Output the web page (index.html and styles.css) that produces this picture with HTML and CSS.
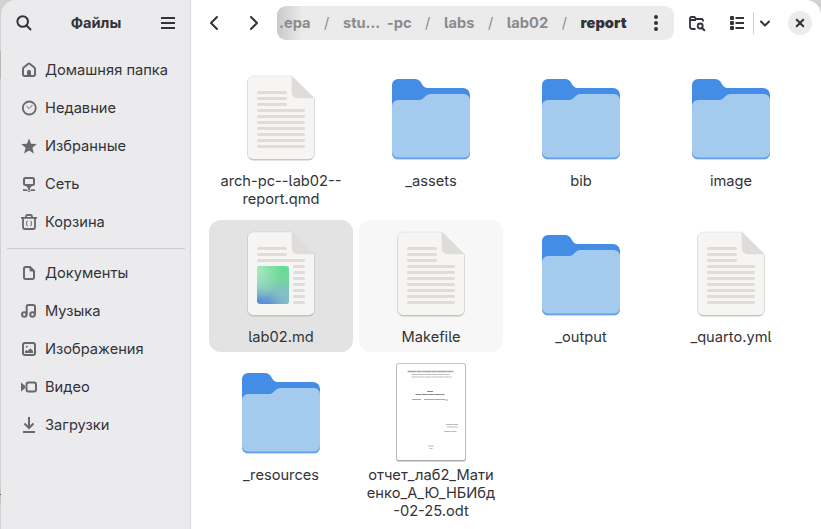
FILE: index.html
```html
<!DOCTYPE html>
<html lang="ru">
<head>
<meta charset="utf-8">
<title>Файлы</title>
<link rel="stylesheet" href="styles.css">
</head>
<body>
<svg class="defs" width="0" height="0" aria-hidden="true">
  <defs>
    <linearGradient id="green" x1="0.65" y1="0" x2="0.35" y2="1"><stop offset="0" stop-color="#66dd93"/><stop offset=".3" stop-color="#72d6a0"/><stop offset=".65" stop-color="#7fbfc0"/><stop offset="1" stop-color="#5b90d8"/></linearGradient>
    <radialGradient id="pale" cx="0" cy=".15" r=".75"><stop offset="0" stop-color="#a9e8bd"/><stop offset="1" stop-color="#a9e8bd" stop-opacity="0"/></radialGradient>
    <radialGradient id="haze" cx="1" cy=".95" r=".6"><stop offset="0" stop-color="#88bdc9"/><stop offset="1" stop-color="#88bdc9" stop-opacity="0"/></radialGradient>
    <symbol id="sheet" viewBox="0 0 96 96">
      <path d="M20.500 7H59L82 29.500V84.500a6 6 0 0 1-6 6H20a6 6 0 0 1-6-6V13a6 6 0 0 1 6.500-6z" fill="#000" opacity=".1"/>
      <path d="M20.500 6H59L81.500 28.500V83.500a6 6 0 0 1-6 6h-55a6 6 0 0 1-6-6V12a6 6 0 0 1 6-6z" fill="#f6f5f4" stroke="#000" stroke-opacity=".09" stroke-width=".8"/>
      <path d="M17 88.500q1.500 1.300 3.500 1.300h55q2 0 3.500-1.300" fill="none" stroke="#bdbcba" stroke-width="1"/>
      <path d="M58.700 6L81.500 28.300H64.700a6 6 0 0 1-6-6z" fill="#deddda"/>
    </symbol>
    <symbol id="text-file" viewBox="0 0 96 96">
      <use href="#sheet"/>
      <path d="M25.500 22.500h27M25.500 28.500h27M25.500 34.500h27M25.500 40.500h45M25.500 46.500h45M25.500 52.500h45M25.500 58.500h45M25.500 64.500h45M25.500 70.500h45M25.500 76.500h45" stroke="#deddda" stroke-width="3" stroke-linecap="round"/>
    </symbol>
    <symbol id="markdown-file" viewBox="0 0 96 96">
      <use href="#sheet"/>
      <path d="M25.500 22.500h27M25.500 28.500h27M25.500 34.500h45M61.500 40.500h9M61.500 46.500h9M61.500 52.500h9M61.500 58.500h9M61.500 64.500h9M61.500 70.500h9M61.500 76.500h9" stroke="#deddda" stroke-width="3" stroke-linecap="round"/>
      <rect x="24" y="40" width="32" height="38" rx="3" fill="url(#green)"/>
      <rect x="24" y="40" width="32" height="38" rx="3" fill="url(#pale)"/>
      <rect x="24" y="40" width="32" height="38" rx="3" fill="url(#haze)"/>
    </symbol>
    <symbol id="folder" viewBox="0 0 96 96">
      <path d="M9 24V84a6 6 0 0 0 6 6H81a6 6 0 0 0 6-6V26z" fill="#000" opacity=".15"/>
      <path d="M15 9H32.500C39 9 38.500 18 44 18H80a7 7 0 0 1 7 7V83a6 6 0 0 1-6 6H15a6 6 0 0 1-6-6V15a6 6 0 0 1 6-6z" fill="#438de6"/>
      <path d="M9 78V83a6 6 0 0 0 6 6H81a6 6 0 0 0 6-6V78z" fill="#62a0ea"/>
      <path d="M15 30H36C42 30 41 24 48 24H81a6 6 0 0 1 6 6V81.500a6 6 0 0 1-6 6H15a6 6 0 0 1-6-6V36a6 6 0 0 1 6-6z" fill="#a4caee"/>
    </symbol>
  </defs>
</svg>
<div class="window">
  <aside class="sidebar">
    <header class="side-header">
      <svg class="icon" viewBox="0 0 16 16"><circle cx="6.700" cy="6.500" r="5.300" class="s2"/><path d="M10.500 10.500l4 4" class="s2 round"/></svg>
      <h1>Файлы</h1>
      <svg class="icon" viewBox="0 0 16 16"><path d="M1 3h14M1 8h14M1 13h14" class="s2"/></svg>
    </header>
    <nav class="places">
      <a><svg class="icon" viewBox="0 0 16 16"><path d="M2 7v5.500A1.500 1.500 0 0 0 3.500 14h9a1.500 1.500 0 0 0 1.500-1.500V7q0-.8-.7-1.500L8.700 1.700q-.7-.5-1.400 0L2.700 5.500Q2 6.200 2 7z" class="s2"/><path d="M6 14V9.500a1.500 1.500 0 0 1 1.500-1.500h1A1.500 1.500 0 0 1 10 9.500V14z"/></svg>Домашняя папка</a>
      <a><svg class="icon" viewBox="0 0 16 16"><circle cx="8.300" cy="8" r="6.500" class="s2 thin"/><path d="M5.500 6l2.700 2.500 3.300-3.500" class="s1"/></svg>Недавние</a>
      <a><svg class="icon" viewBox="0 0 16 16"><path d="M8 .5l2.100 5.300 5.700.3-4.400 3.700 1.500 5.700L8 12.400l-4.900 3.100 1.500-5.700L.2 6.100l5.700-.3z"/></svg>Избранные</a>
      <a><svg class="icon" viewBox="0 0 16 16"><rect x="3" y="2" width="10" height="7" rx="1.500" class="s2"/><path d="M5 10h6l-2 2v1H7v-1zM2 13.300h4v1.800H2zM10 13.300h4v1.800h-4z"/><circle cx="8" cy="14.500" r="1.200" class="s1"/></svg>Сеть</a>
      <a><svg class="icon" viewBox="0 0 16 16"><path d="M0 3.800h16M5 3.500V2.500A1.500 1.500 0 0 1 6.500 1h3A1.500 1.500 0 0 1 11 2.500v1M2 4v9a2 2 0 0 0 2 2h8a2 2 0 0 0 2-2V4" class="s2 thin"/><path d="M6.700 7q-1 0-1 1v3q0 1 1 1M9.300 7q1 0 1 1v3q0 1-1 1" class="s1"/></svg>Корзина</a>
      <hr>
      <a><svg class="icon" viewBox="0 0 16 16"><path d="M4.500 2H9l4 4v6.500a1.500 1.500 0 0 1-1.500 1.500h-7A1.500 1.500 0 0 1 3 12.500v-9A1.500 1.500 0 0 1 4.500 2z" class="s2"/><path d="M8.500 1.500V5A1.500 1.500 0 0 0 10 6.500h3.500z"/></svg>Документы</a>
      <a><svg class="icon" viewBox="0 0 16 16"><circle cx="3.300" cy="11.500" r="2.300" class="s2"/><circle cx="11.500" cy="11.500" r="2.300" class="s2"/><path d="M5.700 11.500V3.500A1.500 1.500 0 0 1 7.200 2h5.300A1.500 1.500 0 0 1 14 3.500v8" class="s2"/></svg>Музыка</a>
      <a><svg class="icon" viewBox="0 0 16 16"><rect x="2" y="2" width="12" height="12" rx="2" class="s2"/><path d="M4 12v-2l1.500-1 1 .9L9.500 7.200 12 10v2z"/><circle cx="5.700" cy="5.700" r="1"/></svg>Изображения</a>
      <a><svg class="icon" viewBox="0 0 16 16"><rect x="5.500" y="3.500" width="9.500" height="9" rx="2" class="s2"/><path d="M0 3.500l4 3.300v2.400L0 12.500z"/></svg>Видео</a>
      <a><svg class="icon" viewBox="0 0 16 16"><path d="M8 0v10M3.500 6.500L8 11l4.500-4.500M2 15h12" class="s2"/></svg>Загрузки</a>
    </nav>
  </aside>
  <main class="content">
    <header class="toolbar">
      <svg class="icon nav-back" viewBox="0 0 16 16"><path d="M11 2L5 8l6 6" class="s2 round"/></svg>
      <svg class="icon nav-next" viewBox="0 0 16 16"><path d="M5 2l6 6-6 6" class="s2 round"/></svg>
      <div class="pathbar">
        <span>.epa</span><i>/</i><span>stu… &nbsp;-pc</span><i>/</i><span>labs</span><i>/</i><span>lab02</span><i>/</i><b>report</b>
        <svg class="icon dots" viewBox="0 0 16 16"><circle cx="8" cy="2" r="2"/><circle cx="8" cy="8" r="2"/><circle cx="8" cy="14" r="2"/></svg>
      </div>
      <svg class="icon find" viewBox="0 0 16 16"><path d="M6.500 14h-3A2.500 2.500 0 0 1 1 11.500V3.500A1.500 1.500 0 0 1 2.500 2H5.500l1.500 2h5.500A1.500 1.500 0 0 1 14 5.500V6.500M1 5h6" class="s2 thin"/><circle cx="11.200" cy="11" r="2.500" class="s2 thin"/><path d="M13 13l2.300 2.300" class="s2 round"/></svg>
      <svg class="icon view" viewBox="0 0 16 16"><rect x="1" y="1" width="4" height="4" rx="1"/><rect x="1" y="6" width="4" height="4" rx="1"/><rect x="1" y="11" width="4" height="4" rx="1"/><path d="M6.500 3H15M6.500 8H15M6.500 13H15" class="s2"/></svg>
      <span class="divider"></span>
      <svg class="icon caret" viewBox="0 0 16 16"><path d="M4 6.500l4 4 4-4" class="s2 round"/></svg>
      <span class="close"><svg class="icon" viewBox="0 0 16 16"><path d="M4.700 4.700l6.600 6.600M11.300 4.700l-6.600 6.600" class="s2 round"/></svg></span>
    </header>
    <section class="files">
      <figure><svg><use href="#text-file"/></svg><figcaption>arch-pc--lab02--<br>report.qmd</figcaption></figure>
      <figure><svg><use href="#folder"/></svg><figcaption>_assets</figcaption></figure>
      <figure><svg><use href="#folder"/></svg><figcaption>bib</figcaption></figure>
      <figure><svg><use href="#folder"/></svg><figcaption>image</figcaption></figure>
      <figure class="selected"><svg><use href="#markdown-file"/></svg><figcaption>lab02.md</figcaption></figure>
      <figure class="hover"><svg><use href="#text-file"/></svg><figcaption>Makefile</figcaption></figure>
      <figure><svg><use href="#folder"/></svg><figcaption>_output</figcaption></figure>
      <figure><svg><use href="#text-file"/></svg><figcaption>_quarto.yml</figcaption></figure>
      <figure><svg><use href="#folder"/></svg><figcaption>_resources</figcaption></figure>
      <figure>
        <svg viewBox="0 0 96 96">
          <rect x="13" y="-1" width="70" height="98.500" rx="2.500" fill="#000" opacity=".22"/>
          <rect x="13.500" y="0" width="69" height="97.500" rx="2" fill="#000" opacity=".14"/>
          <rect x="14" y="0" width="68" height="96" rx="1.500" fill="#fff"/>
          <path d="M24.500 7.500h46" stroke="#a4a4a4" stroke-width="1.300" stroke-dasharray="9 .4 5 .4"/>
          <path d="M28.500 10.500h38M28.500 13h40" stroke="#bdbdbd" stroke-width="1.100" stroke-dasharray="7 .4 5 .4"/>
          <path d="M44 27.500h6M32.500 30.500h29" stroke="#888" stroke-width="1.200" stroke-dasharray="6 .4"/>
          <path d="M29 35.500h9M41 35.500h21M62 36h3" stroke="#aaa" stroke-width="1.100"/>
          <path d="M63 60.500h12M64 63h11M61 67.500h13M45 82h6M46.500 84.500h3" stroke="#bbb" stroke-width="1.100" stroke-dasharray="6 .4"/>
        </svg>
        <figcaption>отчет_лаб2_Мати<br>енко_А_Ю_НБИбд<br>-02-25.odt</figcaption>
      </figure>
    </section>
  </main>
</div>
</body>
</html>
```
FILE: styles.css
```css
* { box-sizing: border-box; }
body {
  margin: 0;
  width: 821px;
  height: 529px;
  overflow: hidden;
  background: #d2d2d2;
  color: #333338;
  font: 14.667px/18px Inter, "Noto Sans", sans-serif;
  font-feature-settings: "cv05";
}
.defs { position: absolute; }
.window {
  display: flex;
  height: 529px;
  padding-left: 1px;
  background: linear-gradient(#d2d2d2 51px, #bdb8b4 51px, #bdb8b4 79px, #d2d2d2 79px, #d2d2d2 487px, #c8c5bf 487px, #c8c5bf 494px, #55555c 494px, #55555c 495px, #c8c5bf 495px, #c8c5bf 504px, #d2d2d2 504px);
}
.icon {
  display: block;
  flex: none;
  width: 16px;
  height: 16px;
  fill: currentColor;
  overflow: visible;
}
.s1, .s2 { fill: none; stroke: currentColor; }
.s1 { stroke-width: 1; }
.s2 { stroke-width: 2; }
.thin { stroke-width: 1.8; }
.round { stroke-linecap: round; stroke-linejoin: round; }

.sidebar {
  width: 190px;
  flex: none;
  background: #ebebed;
  border-right: 1px solid #d9d9db;
  border-radius: 15px 0 0 0;
}
.side-header {
  display: flex;
  align-items: center;
  justify-content: space-between;
  height: 46px;
  padding: 0 14px 0 15px;
}
.side-header h1 {
  margin: 0;
  font-size: 14.667px;
  font-weight: 700;
}
.places { padding: 5px 5px 5px 6px; }
.places a {
  display: flex;
  align-items: center;
  gap: 8px;
  height: 38px;
  padding-left: 14px;
  white-space: nowrap;
}
.places .icon { color: #69696c; }
.places hr {
  height: 1px;
  margin: 7px 0 5px;
  border: 0;
  background: #cdcdcf;
}

.content {
  flex: 1;
  min-width: 0;
  background: #fff;
  border-radius: 0 15px 0 0;
}
.toolbar {
  display: flex;
  align-items: center;
  height: 46px;
  padding-left: 15px;
}
.nav-next { margin-left: 24px; }
.pathbar {
  display: flex;
  align-items: center;
  width: 397px;
  height: 34px;
  margin-left: 15px;
  padding-left: 2px;
  border-radius: 9px;
  background: linear-gradient(90deg, #c9c9c9, #ebebeb 26px);
  color: #8b8b8d;
  font-weight: 700;
  white-space: nowrap;
}
.pathbar i {
  flex: none;
  width: 32.4px;
  text-align: center;
  font-style: normal;
  font-weight: 400;
}
.pathbar b, .pathbar .dots { color: #333338; }
.dots { margin-left: auto; margin-right: 10px; }
.find { margin-left: 15px; }
.view { margin-left: 24px; }
.divider {
  width: 1px;
  height: 22px;
  margin-left: 8px;
  background: #cfcfcf;
}
.caret { margin-left: 3px; }
.close {
  display: grid;
  place-items: center;
  width: 24px;
  height: 24px;
  margin-left: 15px;
  border-radius: 50%;
  background: #ebebeb;
}

.files {
  display: grid;
  grid-template-columns: repeat(4, 144px);
  gap: 6px;
  padding: 18px 0 0 18px;
}
.files figure {
  margin: 0;
  padding: 6px 0;
  border-radius: 12px;
  text-align: center;
  white-space: nowrap;
}
.files figure > svg {
  display: block;
  width: 96px;
  height: 96px;
  margin: 0 auto 6px;
  overflow: visible;
}
.files .selected { background: #e3e3e3; }
.files .hover { background: #f7f7f7; }
```
